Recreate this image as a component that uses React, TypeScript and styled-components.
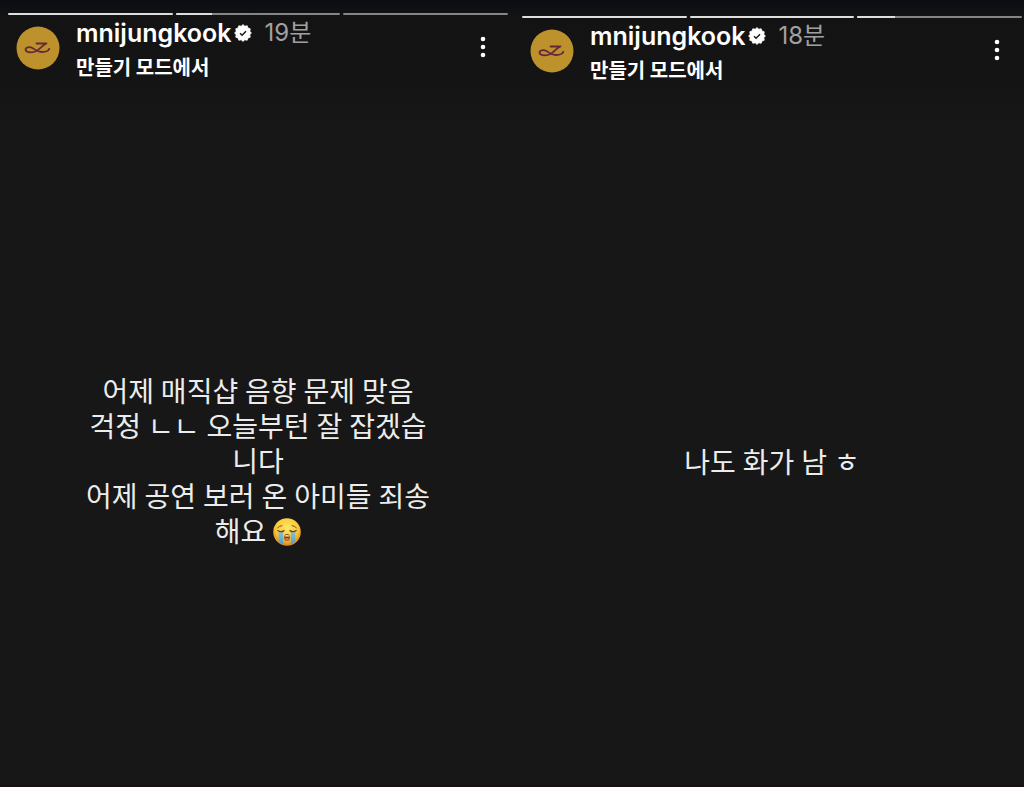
import React from "react";
import styled, { createGlobalStyle } from "styled-components";

const GlobalStyle = createGlobalStyle`
  * { box-sizing: border-box; }
  body {
    margin: 0;
    background: #171717;
    color: #fff;
    font-family: Inter, "Noto Sans CJK KR", sans-serif;
  }
`;

const Page = styled.main`
  display: grid;
  grid-template-columns: 1fr 1fr;
  min-height: 100vh;
  background: linear-gradient(#0b0d14 0, #131313 16px, #141414 70px, #171717 130px);
  border-bottom: 2px solid #170f13;
`;

const StoryPanel = styled.article<{ $side: "left" | "right" }>`
  display: flex;
  flex-direction: column;
  min-width: 0;
  padding: ${({ $side }) => ($side === "left" ? "13px 4px 0 8px" : "16px 2px 0 10px")};
`;

const ProgressRow = styled.div`
  display: flex;
  gap: 3px;
`;

const ProgressTrack = styled.div`
  flex: 1;
  height: 2px;
  border-radius: 1px;
  background: #858585;
  overflow: hidden;
`;

const ProgressFill = styled.div`
  height: 100%;
  background: #dededc;
`;

const Header = styled.header`
  display: flex;
  align-items: center;
  padding: 2px 12px 0 8px;
`;

const Avatar = styled.svg`
  flex: none;
  width: 44px;
  height: 44px;
  margin-right: 16px;
`;

const Identity = styled.div`
  display: flex;
  flex: 1;
  flex-direction: column;
  gap: 6px;
  min-width: 0;
`;

const NameRow = styled.div`
  display: flex;
  align-items: center;
  height: 32px;
`;

const UserName = styled.a`
  color: #fff;
  font-size: 25px;
  font-weight: 600;
  line-height: 32px;
  text-decoration: none;
`;

const Badge = styled.svg`
  flex: none;
  width: 18px;
  height: 18px;
  margin: 0 12px 0 3px;
`;

const Age = styled.time`
  color: #a0a0a0;
  font-size: 24px;
  font-weight: 400;
  line-height: 32px;
`;

const Source = styled.p`
  margin: 0;
  font-family: "Noto Sans CJK KR", sans-serif;
  font-size: 20px;
  font-weight: 700;
  line-height: 24px;
`;

const MenuButton = styled.button`
  flex: none;
  display: flex;
  align-items: center;
  justify-content: center;
  width: 26px;
  height: 36px;
  padding: 0;
  border: 0;
  background: none;
  color: #fff;
  cursor: pointer;
`;

const MessageArea = styled.div`
  display: flex;
  flex: 1;
  align-items: center;
  justify-content: center;
  padding-top: 60px;
`;

const Message = styled.p`
  margin: 0;
  color: #ececec;
  font-family: Roboto, "Noto Sans CJK KR", sans-serif;
  font-size: 28px;
  font-weight: 400;
  line-height: 35px;
  text-align: center;
`;

const Line = styled.span`
  display: block;
`;

const Emoji = styled.svg`
  width: 28px;
  height: 28px;
  vertical-align: -4px;
`;

function VerifiedBadge() {
  const points = Array.from({ length: 24 }, (_, i) => {
    const r = i % 2 ? 9.4 : 11.2;
    const a = (i * Math.PI) / 12;
    return `${12 + r * Math.sin(a)},${12 - r * Math.cos(a)}`;
  }).join(" ");
  return (
    <Badge viewBox="0 0 24 24" role="img" aria-label="인증됨">
      <polygon points={points} fill="#fff" stroke="#fff" strokeWidth="1" strokeLinejoin="round" />
      <path d="M8 12.2l2.800 2.800 5.200-5.400" fill="none" stroke="#161616" strokeWidth="1.900" />
    </Badge>
  );
}

function ProfilePicture() {
  return (
    <Avatar viewBox="0 0 44 44" aria-hidden="true">
      <circle cx="22" cy="22" r="21.5" fill="#bd922c" />
      <path
        d="M20.500 17.500H30.500C27 18.600 24.500 22.800 20.500 25C17 26.800 10 27 9.600 23.600C9.400 21.200 13.500 20.300 16.500 22C19 23.500 21 25.800 25.500 26C29.500 26.100 32.500 25 33.300 22.800"
        fill="none"
        stroke="#65283a"
        strokeWidth="1.800"
        strokeLinecap="round"
        strokeLinejoin="round"
      />
    </Avatar>
  );
}

function CryingFace() {
  return (
    <Emoji viewBox="0 0 28 28" role="img" aria-label="엉엉 우는 얼굴">
      <defs>
        <radialGradient id="face" cx="50%" cy="35%" r="65%">
          <stop offset="0" stopColor="#ffe766" />
          <stop offset="0.600" stopColor="#fbc93a" />
          <stop offset="1" stopColor="#dc8420" />
        </radialGradient>
        <linearGradient id="tear" x1="0" y1="0" x2="0" y2="1">
          <stop offset="0" stopColor="#8fbfc9" />
          <stop offset="1" stopColor="#4f9dcb" />
        </linearGradient>
      </defs>
      <circle cx="14" cy="14" r="13.800" fill="url(#face)" />
      <path d="M5.600 14h4.600v12.600q-2.600-1-4.600-3zM17.800 14h4.600v9.600q-2 2-4.600 3z" fill="url(#tear)" />
      <g fill="none" stroke="#6b4510" strokeLinecap="round">
        <path d="M4.800 12.600q3 2.200 6.200 0M17 12.600q3.200 2.200 6.200 0" strokeWidth="1.300" />
        <path d="M4.600 9.800q1.800-2 4.400-2.200M19 7.600q2.600 0.200 4.400 2.200" strokeWidth="0.900" />
      </g>
      <ellipse cx="14" cy="19.500" rx="2.800" ry="3.500" fill="#7a4314" />
      <path d="M12 17.600q2-1.400 4 0v0.800h-4z" fill="#fff0d0" />
      <ellipse cx="14" cy="21.400" rx="1.900" ry="1.400" fill="#e8763a" />
    </Emoji>
  );
}

interface StoryProps {
  side: "left" | "right";
  progress: number[];
  age: string;
  minutes: number;
  children: React.ReactNode;
}

function Story({ side, progress, age, minutes, children }: StoryProps) {
  return (
    <StoryPanel $side={side}>
      <ProgressRow>
        {progress.map((value, i) => (
          <ProgressTrack key={i}>
            <ProgressFill style={{ width: `${value}%` }} />
          </ProgressTrack>
        ))}
      </ProgressRow>
      <Header>
        <ProfilePicture />
        <Identity>
          <NameRow>
            <UserName href="#mnijungkook">mnijungkook</UserName>
            <VerifiedBadge />
            <Age dateTime={`PT${minutes}M`}>{age}</Age>
          </NameRow>
          <Source>만들기 모드에서</Source>
        </Identity>
        <MenuButton type="button" aria-label="더 보기">
          <svg width="6" height="24" viewBox="0 0 6 24" fill="currentColor" aria-hidden="true">
            <circle cx="3" cy="3" r="2.300" />
            <circle cx="3" cy="11" r="2.300" />
            <circle cx="3" cy="19" r="2.300" />
          </svg>
        </MenuButton>
      </Header>
      <MessageArea>
        <Message>{children}</Message>
      </MessageArea>
    </StoryPanel>
  );
}

export default function App() {
  return (
    <>
      <GlobalStyle />
      <Page>
        <Story side="left" progress={[100, 22, 0]} age="19분" minutes={19}>
          <Line>어제 매직샵 음향 문제 맞음</Line>
          <Line>걱정 ㄴㄴ 오늘부턴 잘 잡겠습</Line>
          <Line>니다</Line>
          <Line>어제 공연 보러 온 아미들 죄송</Line>
          <Line>
            해요 <CryingFace />
          </Line>
        </Story>
        <Story side="right" progress={[100, 100, 23]} age="18분" minutes={18}>
          <Line>나도 화가 남 ㅎ</Line>
        </Story>
      </Page>
    </>
  );
}
